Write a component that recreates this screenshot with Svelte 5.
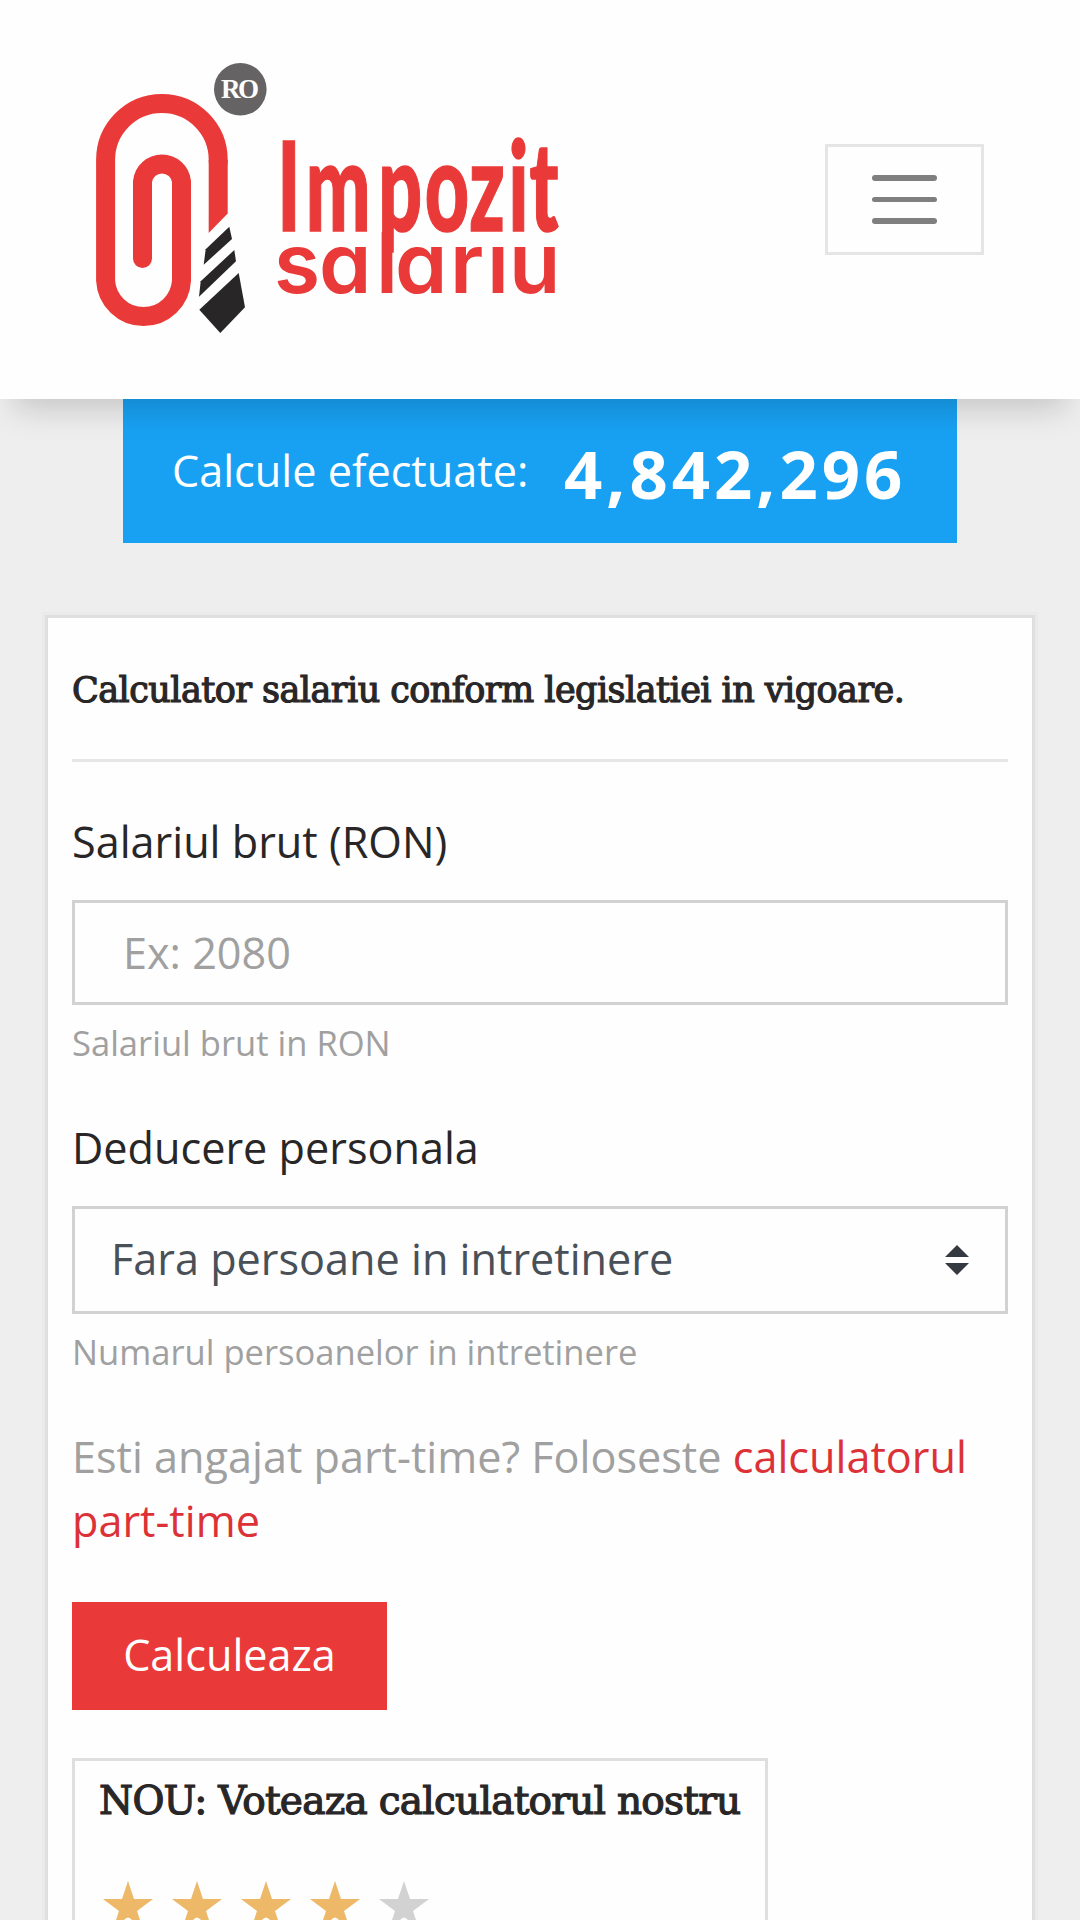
<script>
  let calcule = 4842296;
  let salariu = '';
  let deducere = 'Fara persoane in intretinere';
  let rating = 4;

  const stars = [1, 2, 3, 4, 5];
</script>

<div class="page">
  <header>
    <svg class="logo" viewBox="90 56 475 284" role="img" aria-label="Impozit salariu">
      <!-- agrafa -->
      <g class="red">
        <path
          class="clip"
          d="M218.2 162V160A56.2 56.4 0 0 0 105.6 160V280.5A38 38 0 0 0 181.5 280.5V181.5A19.6 19.6 0 0 0 142.5 181.5V258.5"
        />
        <path d="M208.7 160H227.7V213.5L208.7 233Z" />
      </g>
      <!-- cravata -->
      <g class="tie">
        <path d="M229.3 226.7L232 239L203.7 264.7L205.7 249.3Z" />
        <path d="M234.3 250L236 261.3L199 296.7L200.7 281.3Z" />
        <path d="M238.7 273L245 307.3L220.3 333L199.3 309.7Z" />
      </g>
      <circle cx="240.3" cy="89.3" r="26.3" fill="#666364" />
      <text class="ro" x="240" y="98" text-anchor="middle" textLength="38">RO</text>
      <g class="red">
        <text class="top" transform="scale(0.62 1)" x="447 493 610 685 757 820 854" y="231.5">Impozit</text>
        <text class="bottom" x="274 319 376 395 450 487 509" y="292.5">salarıu</text>
      </g>
    </svg>
    <button class="toggler" aria-label="Meniu">
      <span></span>
      <span></span>
      <span></span>
    </button>
  </header>

  <div class="counter">
    <span class="counter-label">Calcule efectuate:</span>
    <strong>{calcule.toLocaleString('en-US')}</strong>
  </div>

  <main class="card">
    <h1>Calculator salariu conform legislatiei in vigoare.</h1>
    <hr />

    <label for="brut">Salariul brut (RON)</label>
    <input id="brut" type="text" placeholder="Ex: 2080" bind:value={salariu} />
    <small>Salariul brut in RON</small>

    <label for="deducere">Deducere personala</label>
    <button id="deducere" class="select">
      <span>{deducere}</span>
      <svg width="24" height="30" viewBox="0 0 24 30">
        <path d="M0 12L12 0L24 12ZM0 18L12 30L24 18Z" fill="#343a40" />
      </svg>
    </button>
    <small>Numarul persoanelor in intretinere</small>

    <p>Esti angajat part-time? Foloseste <a href="#part-time">calculatorul part-time</a></p>

    <button class="submit">Calculeaza</button>

    <section class="vote">
      <h2>NOU: Voteaza calculatorul nostru</h2>
      <div class="stars">
        {#each stars as star}
          <svg class:on={star <= rating} width="50" height="50" viewBox="0 0 50 50">
            <path d="M25 0L31 18H50L34 30L40 48L29 39Q25 34 21 39L10 48L16 30L0 18H19Z" />
          </svg>
        {/each}
      </div>
    </section>
  </main>
</div>

<style>
  :global(body) {
    background: #eee;
  }
  .page {
    height: 1920px;
    overflow: hidden;
    background: #eee;
    color: #292627;
    font-family: 'Open Sans', sans-serif;
    font-size: 43.2px;
    line-height: 64px;
  }
  * {
    box-sizing: border-box;
  }

  header {
    position: relative;
    z-index: 1;
    display: flex;
    justify-content: space-between;
    align-items: center;
    height: 399px;
    padding: 0 96px 0 90px;
    background: #fefefe;
    box-shadow: 0 24px 30px -14px rgba(0, 0, 0, 0.17);
  }
  .logo {
    width: 475px;
    height: 284px;
    margin-bottom: 3px;
  }
  .red {
    fill: #e93a39;
  }
  .clip {
    fill: none;
    stroke: #e93a39;
    stroke-width: 19;
    stroke-linecap: round;
  }
  .tie {
    fill: #292627;
  }
  .ro {
    fill: #fff;
    font: bold 27px 'Liberation Serif', serif;
  }
  .top {
    font: 900 124px Lato, sans-serif;
    stroke: #e93a39;
    stroke-width: 1.5;
  }
  .bottom {
    font: 600 84px Inter, sans-serif;
    font-feature-settings: 'cv11';
  }
  .toggler {
    display: flex;
    flex-direction: column;
    justify-content: center;
    align-items: center;
    gap: 16px;
    width: 159px;
    height: 111px;
    padding: 0;
    border: 3px solid #e5e5e5;
    background: none;
  }
  .toggler span {
    width: 65px;
    height: 5.5px;
    border-radius: 3px;
    background: #7f7f7f;
  }

  .counter {
    display: flex;
    align-items: center;
    width: 834px;
    height: 144px;
    margin: 0 auto 72px;
    padding: 0 49px 1px;
    background: #18a1f3;
    color: #fff;
  }
  .counter-label {
    width: 392px;
    white-space: nowrap;
  }
  .counter strong {
    margin-top: 4px;
    font: bold 67px/80px 'Open Sans', sans-serif;
    letter-spacing: 4px;
  }

  .card {
    width: 990px;
    height: 1400px;
    margin: 0 auto;
    padding: 45px 24px;
    border: 3px solid #dfdfdf;
    background: #fefefe;
    box-shadow: 0 0 0 3px #eaeaea;
  }
  h1,
  h2 {
    margin: 0;
    font-family: 'DejaVu Serif', serif;
    font-weight: normal;
    white-space: nowrap;
    -webkit-text-stroke: 1.2px #292627;
  }
  h1 {
    height: 96px;
    font-size: 35px;
    line-height: 54px;
    letter-spacing: -0.54px;
  }
  hr {
    height: 3px;
    margin: 0 0 48px;
    border: 0;
    background: #e6e6e6;
  }
  label {
    display: block;
    margin-bottom: 26px;
  }
  input,
  .select {
    display: flex;
    width: 100%;
    border: 3px solid #d2d2d2;
    background: #fefefe;
    font: inherit;
  }
  input {
    height: 105px;
    padding: 0 48px;
  }
  input::placeholder {
    color: #a0a0a0;
    opacity: 1;
  }
  .select {
    justify-content: space-between;
    align-items: center;
    height: 108px;
    padding: 0 36px;
    color: #495057;
  }
  .select span {
    margin-bottom: 3px;
  }
  small {
    display: block;
    margin: 13px 0 48px;
    color: #a0a0a0;
    font-size: 34.56px;
    line-height: 50px;
  }
  p {
    margin: 0 0 49px;
    color: #a0a0a0;
  }
  a {
    color: #dc3237;
    text-decoration: none;
  }
  .submit {
    display: block;
    width: 315px;
    height: 108px;
    padding: 0 0 3px;
    border: 0;
    background: #e93a39;
    color: #fff;
    font: inherit;
  }

  .vote {
    width: 696px;
    height: 220px;
    margin-top: 48px;
    padding: 12px 24px;
    border: 3px solid #dfdfdf;
  }
  h2 {
    height: 108px;
    font-size: 39px;
    line-height: 56px;
    letter-spacing: -0.75px;
  }
  .stars {
    display: flex;
    gap: 19px;
    padding-left: 4px;
    fill: #d2d2d2;
  }
  .stars .on {
    fill: #edb867;
  }
</style>
